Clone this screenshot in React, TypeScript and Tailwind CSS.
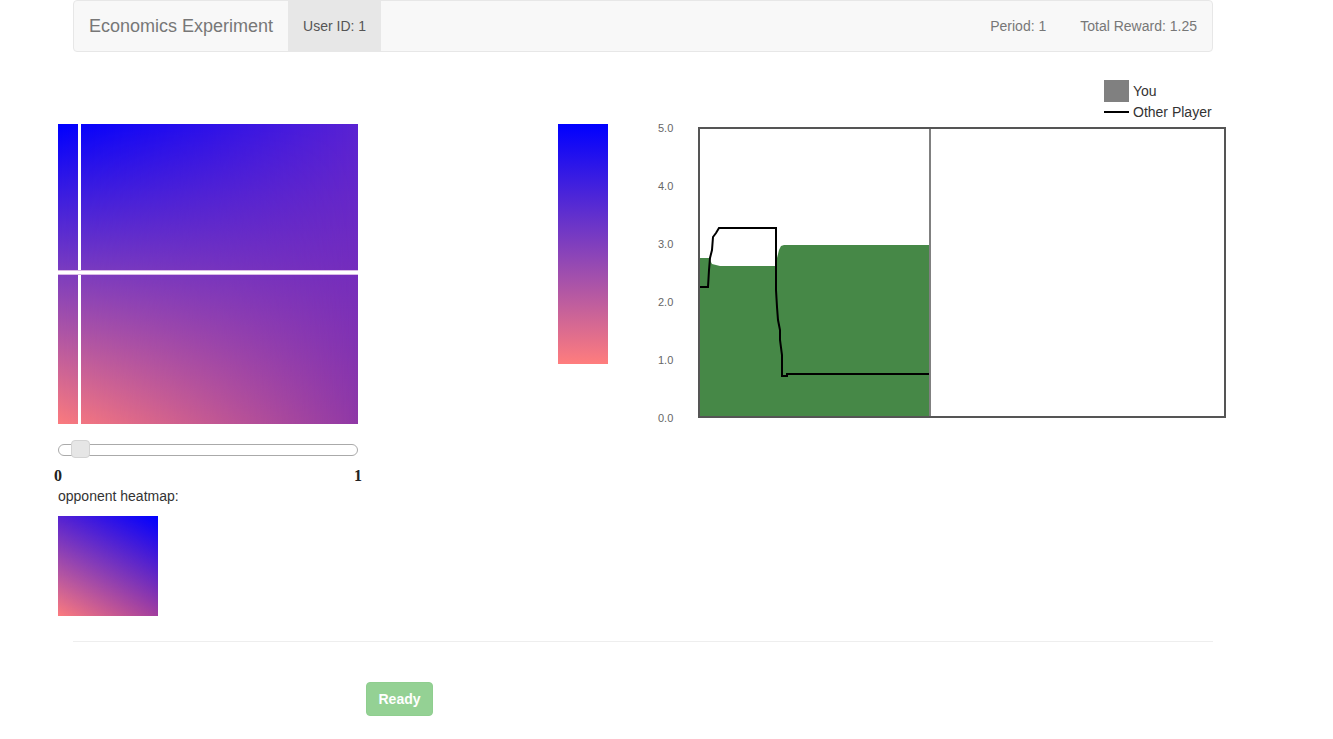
import React from "react";

function Chart() {
  const labels = ["5.0", "4.0", "3.0", "2.0", "1.0", "0.0"];
  return (
    <svg width={580} height={310} className="block">
      {labels.map((l, i) => (
        <text key={l} x={8} y={12 + i * 58} fontSize={11} fill="#666" fontFamily="'Liberation Sans', Arial, sans-serif">
          {l}
        </text>
      ))}
      <polygon
        points="49,138 59,138 62,144 70,146 126,146 127,138 129,130 131,126 134,125 279,125 279,297 49,297"
        fill="#468847"
      />
      <polyline
        points="50,167 58,167 59,150 60,138 62,130 63,117 66,113 69,108 126,108 126,170 127,187 128,200 130,210 130,220 132,235 132,256 137,256 137,254 279,254"
        fill="none"
        stroke="#000"
        strokeWidth={2}
      />
      <line x1={280} y1={8} x2={280} y2={297} stroke="#808080" strokeWidth={2} />
      <rect x={49} y={8} width={526} height={289} fill="none" stroke="#555" strokeWidth={2} />
    </svg>
  );
}

export default function App() {
  return (
    <div className="min-h-[739px] bg-white text-[#333] font-['Liberation_Sans',Arial,sans-serif] text-[14px]">
      {/* Navbar */}
      <div className="ml-[73px] w-[1140px] h-[52px] border border-[#e7e7e7] rounded bg-[#f8f8f8] flex items-stretch">
        <div className="px-[15px] flex items-center text-[18px] text-[#777]">Economics Experiment</div>
        <div className="px-[15px] flex items-center bg-[#e7e7e7] text-[#555]">User ID: 1</div>
        <div className="ml-auto flex items-center pr-[15px] text-[#777]">
          <span className="px-[15px]">Period: 1</span>
          <span className="pl-[19px]">Total Reward: 1.25</span>
        </div>
      </div>

      {/* Main */}
      <div className="flex items-start pl-[58px]">
        {/* Left column */}
        <div className="mt-[72px] w-[300px] flex flex-col">
          <div className="relative w-[300px] h-[300px] overflow-hidden">
            <div className="absolute inset-0 bg-[linear-gradient(to_bottom,#0000ff,#fb7b7e)]" />
            <div className="absolute inset-0 bg-[linear-gradient(to_bottom,#5a22d2,#8f38a6)] [mask-image:linear-gradient(to_right,transparent,black)]" />
            <div className="absolute top-0 bottom-0 left-[20px] w-[3px] bg-white" />
            <div className="absolute left-0 right-0 top-[146px] h-[5px] bg-[#d9b8e6]" />
            <div className="absolute left-0 right-0 top-[147px] h-[3px] bg-white" />
          </div>
          <div className="relative mt-[20px] h-[12px] w-[300px] rounded-full border border-[#aaa] bg-white">
            <div className="absolute left-[12px] top-[-5px] w-[19px] h-[18px] rounded-[4px] border border-[#d3d3d3] bg-[#e6e6e6]" />
          </div>
          <div className="-ml-[4px] w-[308px] mt-[9px] flex justify-between font-['Liberation_Serif',serif] font-bold text-[16px] leading-[22px] text-[#222]">
            <span>0</span>
            <span>1</span>
          </div>
          <div className="leading-[20px] -mt-[1px]">opponent heatmap:</div>
          <div className="relative mt-[10px] w-[100px] h-[100px] overflow-hidden">
            <div className="absolute inset-0 bg-[linear-gradient(to_bottom,#5522d2,#fc7c7e)]" />
            <div className="absolute inset-0 bg-[linear-gradient(to_bottom,#0000ff,#a23e9e)] [mask-image:linear-gradient(to_right,transparent,black)]" />
          </div>
        </div>

        {/* Colorbar */}
        <div className="mt-[72px] ml-[200px] w-[50px] h-[240px] bg-[linear-gradient(to_bottom,#0000ff,#ff7d7d)]" />

        {/* Chart column */}
        <div className="ml-[42px] mt-[28px] flex flex-col">
          <div className="h-[40px] ml-[454px] flex flex-col">
            <div className="flex items-center h-[22px]">
              <div className="w-[25px] h-[22px] bg-[#808080]" />
              <span className="ml-[4px]">You</span>
            </div>
            <div className="flex items-center h-[20px]">
              <div className="w-[25px] h-[2px] bg-black" />
              <span className="ml-[4px]">Other Player</span>
            </div>
          </div>
          <Chart />
        </div>
      </div>

      <div className="ml-[73px] w-[1140px] mt-[25px] border-t border-[#eee]" />
      <div className="pl-[366px] pt-[40px]">
        <button className="h-[34px] w-[67px] rounded-[4px] border border-[#8fce8f] bg-[#94d194] text-white font-bold text-[14px]">
          Ready
        </button>
      </div>
    </div>
  );
}
